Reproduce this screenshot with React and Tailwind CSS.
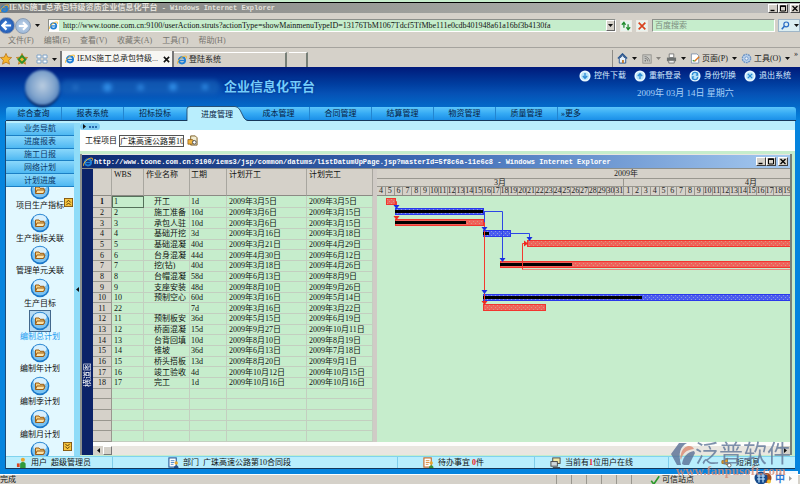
import React from "react";

const ROWS = [
  ["1", "开工", "1d", "2009年3月5日", "2009年3月5日"],
  ["2", "施工准备", "10d", "2009年3月6日", "2009年3月15日"],
  ["3", "承包人驻", "10d", "2009年3月6日", "2009年3月15日"],
  ["4", "基础开挖", "3d", "2009年3月16日", "2009年3月18日"],
  ["5", "基础混凝", "40d", "2009年3月21日", "2009年4月29日"],
  ["6", "台身混凝", "44d", "2009年4月30日", "2009年6月12日"],
  ["7", "挖(钻)", "40d", "2009年3月18日", "2009年4月26日"],
  ["8", "台帽混凝", "58d", "2009年6月13日", "2009年8月9日"],
  ["9", "支座安装", "48d", "2009年8月10日", "2009年9月26日"],
  ["10", "预制空心", "60d", "2009年3月16日", "2009年5月14日"],
  ["22", "", "7d", "2009年3月16日", "2009年3月22日"],
  ["11", "预制板安", "36d", "2009年5月15日", "2009年6月19日"],
  ["12", "桥面混凝", "15d", "2009年9月27日", "2009年10月11日"],
  ["13", "台背回填", "10d", "2009年8月10日", "2009年8月19日"],
  ["14", "锥坡", "36d", "2009年6月13日", "2009年7月18日"],
  ["15", "桥头搭板", "13d", "2009年8月20日", "2009年9月1日"],
  ["16", "竣工验收", "4d", "2009年10月12日", "2009年10月15日"],
  ["17", "完工", "1d", "2009年10月16日", "2009年10月16日"],
  [], [], [], [], [],
];

const DAYS = [...Array(28).keys()].map((i) => i + 4).concat([...Array(19).keys()].map((i) => i + 1));

const MENUS = ["文件(F)", "编辑(E)", "查看(V)", "收藏夹(A)", "工具(T)", "帮助(H)"];
const NAV = ["综合查询", "报表系统", "招标投标", "进度管理", "成本管理", "合同管理", "结算管理", "物资管理", "质量管理"];
const GROUPS = ["业务导航", "进度报表", "施工日报", "网络计划", "计划进度"];
const PLANS = ["项目生产指标", "生产指标关联", "管理单元关联", "生产目标", "编制总计划", "编制年计划", "编制季计划", "编制月计划", ""];

/* x, y, width, progress width, colour; a width of 3000 runs off the visible range */
const BARS = [
  [9, 2, 9, 0, "r"],
  [18, 12, 88, 88, "b"],
  [18, 23, 88, 71, "r"],
  [106, 34, 27, 6, "b"],
  [150, 44, 3000, 0, "r"],
  [123, 65, 3000, 72, "r"],
  [106, 98, 3000, 159, "b"],
  [106, 108, 62, 0, "r"],
];

function Ie({ size = "size-[9px]" }) {
  return (
    <svg viewBox="0 0 16 16" className={`${size} shrink-0`} aria-hidden="true">
      <circle cx="8" cy="8.5" r="5" fill="none" stroke="#1f7fd6" strokeWidth="3" />
      <path d="M4 8.8h9" stroke="#1f7fd6" strokeWidth="2.2" />
      <path d="M1 14C-1 10 9 0 15 2c1 1 0 3-1 4" fill="none" stroke="#f2b632" strokeWidth="1.6" />
    </svg>
  );
}

function Caret({ className = "" }) {
  return (
    <svg viewBox="0 0 5 3" className={`w-[5px] h-[3px] shrink-0 ${className}`} aria-hidden="true">
      <path d="M0 0h5L2.500 3z" fill="#111" />
    </svg>
  );
}

function Star({ color }) {
  return (
    <svg viewBox="0 0 14 14" className="size-[12px] shrink-0" aria-hidden="true">
      <path d="M7 .5l2 4.300 4.600.500-3.500 3.100 1 4.700L7 10.700l-4.100 2.400 1-4.700L.400 5.300 5 4.800z" fill="#f6b52d" stroke="#b26b10" strokeWidth=".8" />
      {color && <path d="M7 3.500L11 7.500 7 11.500 3 7.500z" fill="none" stroke={color} strokeWidth="2.200" />}
    </svg>
  );
}

function Sheet({ red }) {
  return (
    <svg viewBox="0 0 12 12" className="size-[11px] shrink-0" aria-hidden="true">
      <rect x="1" y="1" width="8" height="10" fill="#fff" stroke={red ? "#c8641e" : "#275a9a"} strokeWidth="1.200" />
      <path d="M3 4h4M3 6h4M3 8h3" stroke={red ? "#d98a3a" : "#4a83c4"} />
      <circle cx="9" cy="6.500" r="1.800" fill="#e8a52c" />
      <path d="M6.500 12c0-4 5-4 5 0z" fill={red ? "#3d9436" : "#28548e"} />
    </svg>
  );
}

function TitleBar() {
  return (
    <div className="border-t-2 border-[#c6edcc] bg-[#d5d1c9] pb-1">
      <div className="flex h-[11px] items-center border-t border-black bg-linear-to-r from-[#808080] via-[#9c9e9a] to-[#bcbcbc] text-[8px] font-bold text-[#e4e2dc]">
        <Ie />
        <span className="grow truncate font-['Liberation_Mono','Noto_Sans_CJK_SC',monospace] text-[7px] leading-[10px]">
          <span className="font-['Liberation_Serif','Noto_Sans_CJK_SC',serif] text-[8px]">IEMS施工总承包特级资质企业信息化平台</span> - Windows Internet Explorer
        </span>
        <WinButtons />
      </div>
    </div>
  );
}

function WinButtons() {
  const box = "flex h-[9px] w-[10px] items-center justify-center border border-t-white border-l-white border-r-[#404040] border-b-[#404040] bg-[#d5d1c9]";
  return (
    <div className="flex shrink-0">
      <button aria-label="最小化" className={box}>
        <svg viewBox="0 0 8 7" className="h-[7px] w-[8px]"><path d="M1.500 5.500h4" stroke="#000" strokeWidth="1.400" /></svg>
      </button>
      <button aria-label="最大化" className={box}>
        <svg viewBox="0 0 8 7" className="h-[7px] w-[8px]"><path d="M1.500 1v5h5V1z" fill="none" stroke="#000" /><path d="M1 1.200h6" stroke="#000" strokeWidth="1.400" /></svg>
      </button>
      <button aria-label="关闭" className={`ml-[2px] ${box}`}>
        <svg viewBox="0 0 8 7" className="h-[7px] w-[8px]"><path d="M1.500 1l5 5M6.500 1l-5 5" stroke="#000" strokeWidth="1.300" /></svg>
      </button>
    </div>
  );
}

function AddressRow() {
  const field = "h-[13px] min-w-0 border border-[#8c8f8a] border-r-white border-b-white bg-[#c6edcc]";
  const small = "flex h-[12px] w-[12px] shrink-0 items-center justify-center border border-[#eeebe4] bg-[#e8f3ee]";
  return (
    <div className="flex h-[17px] items-center bg-[#d5d1c9]">
      <button aria-label="后退" className="-ml-[2px] flex size-[17px] shrink-0 items-center justify-center rounded-full border border-[#8494b0] bg-radial from-[#4b8ee4] to-[#12469f]">
        <svg viewBox="0 0 12 12" className="size-[11px]"><path d="M6 1.500L1.500 6 6 10.500M2 6h9" fill="none" stroke="#fff" strokeWidth="2.400" /></svg>
      </button>
      <button aria-label="前进" className="flex size-[16px] shrink-0 items-center justify-center rounded-full border border-[#8b9db4] bg-radial from-[#c4d7ec] to-[#8fadd0]">
        <svg viewBox="0 0 12 12" className="size-[10px]"><path d="M6 1.500L10.500 6 6 10.500M10 6H1" fill="none" stroke="#fff" strokeWidth="2.400" /></svg>
      </button>
      <Caret className="ml-1" />
      <div className={`ml-[8px] flex grow items-center ${field}`}>
        <span className="mr-[4px] flex h-full w-[10px] items-center bg-white"><Ie /></span>
        <input
          aria-label="地址"
          className="min-w-0 grow bg-transparent font-['Liberation_Serif','Noto_Sans_CJK_SC',serif] text-[8px] leading-[10px] text-[#111] outline-none"
          defaultValue="http://www.toone.com.cn:9100/userAction.struts?actionType=showMainmenuTypeID=13176TbM1067Tdcf5TfMbe111e0cdb401948a61a16bf3b4130fa"
        />
        <button aria-label="展开地址" className="flex h-[11px] w-[9px] items-center justify-center border border-t-white border-l-white border-r-[#666] border-b-[#666] bg-[#d5d1c9]"><Caret /></button>
      </div>
      <button aria-label="刷新" className={`ml-[4px] ${small}`}>
        <svg viewBox="0 0 12 12" className="size-[10px]"><path d="M1 4.500l2.500-3 2 3M3.500 2v6M11 7.500l-2.500 3-2-3M8.500 10V4" fill="none" stroke="#1d8a2b" strokeWidth="1.500" /></svg>
      </button>
      <button aria-label="停止" className={`ml-[4px] ${small}`}>
        <svg viewBox="0 0 12 12" className="size-[10px]"><path d="M2 2l8 8M10 2l-8 8" stroke="#d8421d" strokeWidth="2" /></svg>
      </button>
      <input aria-label="百度搜索" placeholder="百度搜索" className={`ml-[4px] w-[123px] shrink-0 pl-[2px] text-[8px] leading-[10px] outline-none placeholder:text-[#7d8d80] ${field}`} />
      <button aria-label="搜索" className="ml-[3px] flex h-[13px] w-[22px] shrink-0 items-center gap-[4px] border border-[#9fb6c8] bg-[#dceef2] pl-[2px]">
        <svg viewBox="0 0 12 12" className="size-[9px]"><circle cx="7" cy="4.500" r="3.200" fill="none" stroke="#2b6cc4" strokeWidth="1.600" /><path d="M4.500 7L1 11" stroke="#2b6cc4" strokeWidth="2" /></svg>
        <Caret />
      </button>
    </div>
  );
}

function TabRow() {
  return (
    <div className="flex h-[20px] items-end border-t border-[#a5a39e] bg-[#d5d1c9] pt-[2px]">
      <div className="flex h-[16px] w-[60px] shrink-0 items-center">
        <Star />
        <span className="w-[4px]" />
        <Star color="#2f8f2a" />
        <span className="w-[8px]" />
        <svg viewBox="0 0 12 10" className="h-[10px] w-[12px]"><path d="M1 1h4v3H1zM7 1h4v3H7zM1 6h4v3H1zM7 6h4v3H7z" fill="#fff" stroke="#7fa3c8" /></svg>
        <Caret className="ml-[4px]" />
      </div>
      <div className="flex h-[16px] w-[114px] shrink-0 items-center gap-[2px] border-l-2 border-r-2 border-l-[#777] border-r-[#777] bg-[#f7f6f3] pl-[3px]">
        <Ie size="size-[10px]" />
        <a href="#main" className="grow truncate text-[8px] leading-[10px] text-[#222]">IEMS施工总承包特级...</a>
        <button aria-label="关闭标签" className="pr-[2px]">
          <svg viewBox="0 0 8 8" className="size-[7px]"><path d="M1 1l6 6M7 1L1 7" stroke="#111" strokeWidth="1.800" /></svg>
        </button>
      </div>
      <div className="flex h-[15px] w-[113px] shrink-0 items-center gap-[2px] border-t border-r-2 border-t-white border-r-[#777f77] pl-[3px]">
        <Ie size="size-[10px]" />
        <a href="#login" className="text-[8px] leading-[10px] text-[#222]">登陆系统</a>
      </div>
      <div className="ml-[2px] h-[15px] w-[19px] shrink-0 border-t border-r-2 border-t-white border-r-[#777f77]" />
      <div className="ml-auto flex h-[17px] shrink-0 items-center border-l border-[#8d8b86] pl-[4px] text-[8px] text-[#222]">
        <svg viewBox="0 0 12 12" className="size-[11px]"><path d="M1 6l5-5 5 5" fill="none" stroke="#28548e" strokeWidth="1.600" /><path d="M2.500 6v5h7V6L6 3z" fill="#e8f1fa" stroke="#28548e" /><path d="M5.500 7.500h2V11h-2z" fill="#c27a2c" /></svg>
        <Caret className="ml-[4px]" />
        <svg viewBox="0 0 12 12" className="ml-[5px] size-[10px]"><rect x="1" y="1" width="10" height="10" fill="#c9c9c4" stroke="#8c8c88" /><circle cx="4" cy="8" r="1" fill="#777" /><path d="M3 5a4 4 0 014 4M3 3a6 6 0 016 6" fill="none" stroke="#777" /></svg>
        <Caret className="ml-[4px] opacity-40" />
        <svg viewBox="0 0 12 12" className="ml-[5px] size-[11px]"><path d="M3.500 1h5v4h-5z" fill="#fff" stroke="#777" /><path d="M1 5h10v4H1z" fill="#6e7271" /><path d="M3 8h6v3H3z" fill="#eee" stroke="#777" /></svg>
        <Caret className="ml-[4px]" />
        <svg viewBox="0 0 12 12" className="ml-[4px] size-[11px]"><path d="M1.500 1h6l2 2v8h-8z" fill="#fff" stroke="#8394ac" /><path d="M5 9l5-5" stroke="#dc7a24" strokeWidth="1.600" /><path d="M3 8l2 1" stroke="#3d9436" strokeWidth="1.400" /></svg>
        <button className="ml-px">页面(P)</button>
        <Caret className="ml-[4px]" />
        <svg viewBox="0 0 12 12" className="ml-[4px] size-[11px]"><circle cx="6" cy="6" r="4.500" fill="#b9d2ee" stroke="#6a92c4" strokeWidth="1.500" strokeDasharray="2 .8" /><circle cx="6" cy="6" r="1.800" fill="#eef4fb" stroke="#6a92c4" /></svg>
        <button className="ml-[2px]">工具(O)</button>
        <Caret className="mx-[4px]" />
        <span className="w-[6px] self-start leading-[8px]">»</span>
      </div>
    </div>
  );
}

function RoundIcon({ d }) {
  return (
    <svg viewBox="0 0 14 14" className="size-[12px] shrink-0" aria-hidden="true">
      <circle cx="7" cy="7" r="6.500" fill="#e9f8ff" />
      <circle cx="7" cy="7" r="4.500" fill="#b5e2f8" />
      <path d={d} fill="none" stroke="#2a8ad4" strokeWidth="1.500" />
    </svg>
  );
}

function Banner() {
  const links = [
    ["控件下载", "M7 3.500v6M4.500 7L7 9.800 9.500 7"],
    ["重新登录", "M7 10.500v-6M4.500 7L7 4.200 9.500 7"],
    ["身份切换", "M4 6a3 3 0 016-.5M10 8a3 3 0 01-6 .5M10 3v3H8M4 11V8h2"],
    ["退出系统", "M4.500 4.500l5 5M9.500 4.500l-5 5"],
  ];
  return (
    <header className="flex h-[40px] justify-between">
      <div className="flex items-center pl-[25px]">
        <div className="size-[35px] rounded-full bg-radial-[at_50%_45%] from-[#b9cce0] via-[#7fa3cc] to-[#2b62ac] shadow-[0_2px_1px_#03174e] blur-[1px]" />
        <div className="flex h-[14px] w-[160px] items-center justify-around rounded-full bg-[#1b68bd]/60 blur-[2px]">
          <span className="size-[5px] rounded-full bg-[#2a73c8]" />
          <span className="size-[9px] rounded-full bg-[#2f8be4]" />
          <span className="size-[7px] rounded-full bg-[#2a7fd8]" />
          <span className="size-[8px] rounded-full bg-[#2f8be4]" />
          <span className="size-[6px] rounded-full bg-[#2f8be4]" />
        </div>
        <h1 className="ml-[4px] text-[13px] leading-[18px] font-bold text-[#74cdfb] [text-shadow:0_0_2px_#00247c]">企业信息化平台</h1>
      </div>
      <div className="flex flex-col pt-[3px] pr-[9px]">
        <nav className="flex gap-[8px] text-[8px] leading-[12px] text-[#d5ecff]">
          {links.map(([t, d]) => (
            <a key={t} href="#link" className="flex items-center gap-[3px]"><RoundIcon d={d} />{t}</a>
          ))}
        </nav>
        <div className="mt-[4px] pl-[58px] text-[9px] leading-[14px] text-[#a8d2f8]">2009年 03月 14日 星期六</div>
      </div>
    </header>
  );
}

function NavBar() {
  return (
    <nav className="mr-[4px] ml-[6px] flex h-[14px] rounded-t-[3px] border-b border-[#16385c] bg-linear-to-b from-[#5cc6fa] via-[#35aaf4] to-[#1a8fe8] text-[8px] leading-[13px] text-[#06203f]">
      {NAV.map((t, i) =>
        i === 3 ? (
          <button key={t} className="relative h-[14px] w-[62px] shrink-0 text-center leading-[13px]">
            <svg viewBox="0 0 62 15" className="absolute -top-px left-0 h-[15px] w-[62px]" aria-hidden="true">
              <path d="M1 15V3q0-2.500 3-2.500h45q3 0 5 3.500l4 8q2 3 4 3z" fill="#b9eefd" />
              <path d="M1 15V3q0-2.500 3-2.500h45q3 0 5 3.500l4 8q2 2.500 4 2.500" fill="none" stroke="#16385c" strokeWidth=".8" />
            </svg>
            <span className="relative">{t}</span>
          </button>
        ) : (
          <button key={t} className={`${i === 0 ? "w-[56px]" : "w-[62px]"} shrink-0 text-center ${i === 2 ? "" : "border-r border-[#2385d0]"}`}>{t}</button>
        )
      )}
      <button className="ml-[3px]">»更多</button>
    </nav>
  );
}

function Folder() {
  return (
    <svg viewBox="0 0 20 20" className="size-[20px]" aria-hidden="true">
      <circle cx="10" cy="10" r="9.300" fill="#1b78c9" />
      <circle cx="10" cy="9.500" r="8" fill="#7cc3f1" />
      <ellipse cx="10" cy="6" rx="6.500" ry="4" fill="#d9f0fd" />
      <path d="M5.500 13V7h3.500l1 1.300h4V13z" fill="#f7cf7d" stroke="#9a5c14" />
      <path d="M5.500 13.500l1.500-3.500h8l-1.500 3.500z" fill="#fbe2a6" stroke="#9a5c14" />
    </svg>
  );
}

function ScrollBadge({ up }) {
  return (
    <svg viewBox="0 0 10 10" className="size-[9px]" aria-hidden="true">
      <rect x=".5" y=".5" width="9" height="9" fill="#f8c63e" stroke="#80540c" />
      <path d={up ? "M2.500 5L5 2.500 7.500 5M2.500 8L5 5.500 7.500 8" : "M2.500 2L5 4.500 7.500 2M2.500 5L5 7.500 7.500 5"} fill="none" stroke="#4a2c00" />
    </svg>
  );
}

function Sidebar() {
  return (
    <aside className="flex w-[68px] shrink-0 flex-col bg-[#e2f8ff]">
      <div className="grid h-[64px] shrink-0 grid-rows-5">
        {GROUPS.map((g) => (
          <button key={g} className="border-b border-[#1b7fc4] bg-linear-to-b from-[#8ad8fb] to-[#4db8f2] text-[8px] leading-[11px] text-[#0b3768]">{g}</button>
        ))}
      </div>
      <div className="relative h-[269px] overflow-hidden">
        <ul className="-mt-[8px] grid h-[294px] grid-rows-9">
          {PLANS.map((p, i) => (
            <li key={i} className="flex flex-col items-center">
              <a href="#plan" className="flex flex-col items-center">
                <span className={i === 4 ? "border border-[#43688c] bg-[#b6daf2]" : "border border-transparent"}><Folder /></span>
                <span className={`text-[8px] leading-[10px] whitespace-nowrap ${i === 4 ? "text-[#1a9af0]" : "text-[#111]"}`}>{p}</span>
              </a>
            </li>
          ))}
        </ul>
        <button aria-label="向上" className="absolute top-[11px] right-[1px]"><ScrollBadge up /></button>
        <button aria-label="向下" className="absolute right-[2px] bottom-[5px]"><ScrollBadge /></button>
      </div>
    </aside>
  );
}

function TaskTable() {
  const th = "border-r border-b border-r-[#a8a69f] border-b-[#8c8a84] bg-[#d5d1c9] pt-[1px] text-left align-top font-normal";
  const td = "overflow-hidden border-r border-b border-[#c3cfc0] p-0 pl-[2px] whitespace-nowrap";
  return (
    <table className="h-[273px] w-[280px] shrink-0 table-fixed border-separate border-spacing-0 bg-[#c6edcc] text-[8px] leading-[9px] text-[#111]">
      <colgroup>
        <col className="w-[19px]" /><col className="w-[32px]" /><col className="w-[46px]" />
        <col className="w-[37px]" /><col className="w-[80px]" /><col className="w-[66px]" />
      </colgroup>
      <thead>
        <tr className="h-[27px]">
          <th className={th} aria-label="序号" />
          <th className={`${th} pl-[2px]`}>WBS</th>
          <th className={`${th} pl-[2px]`}>作业名称</th>
          <th className={`${th} pl-[1px]`}>工期</th>
          <th className={`${th} pl-[2px]`}>计划开工</th>
          <th className={`${th} pl-[2px]`}>计划完工</th>
        </tr>
      </thead>
      <tbody>
        {ROWS.map((r, i) => (
          <tr key={i}>
            <th scope="row" className={`h-[10px] border-r border-b border-[#99978f] bg-[#d5d1c9] p-0 text-center ${i === 0 ? "font-bold" : "font-normal"}`}>{r.length ? i + 1 : ""}</th>
            <td className={i === 0 ? "border border-[#55705a] p-0 pl-px" : td}>{r[0]}</td>
            <td className={`${td} pl-[10px]`}>{r[1]}</td>
            <td className={`${td} pl-px`}>{r[2]}</td>
            <td className={td}>{r[3]}</td>
            <td className={td}>{r[4]}</td>
          </tr>
        ))}
      </tbody>
    </table>
  );
}

function Gantt() {
  return (
    <section aria-label="横道图" className="flex min-w-0 grow flex-col overflow-hidden border-l-4 border-[#d0cbc6] bg-[#c6edcc] text-[8px] text-[#222]">
      <div className="h-[27px] shrink-0 border-b border-[#8c8a84] bg-[#d5d1c9]">
        <div className="h-[10px] border-b border-[#99978f] pl-[237px] leading-[9px]">2009年</div>
        <div className="flex h-[8px] border-b border-[#99978f] leading-[8px]">
          <div className="w-[247px] shrink-0 border-r border-[#99978f] text-center">3月</div>
          <div className="w-[254px] shrink-0 text-center">4月</div>
        </div>
        <div className="grid h-[8px] w-[415px] grid-cols-[repeat(47,minmax(0,1fr))] leading-[8px]">
          {DAYS.map((d, i) => (
            <span key={i} className="flex justify-center border-r border-[#99978f]">{d}</span>
          ))}
        </div>
      </div>
      <svg className="h-[246px] w-full" aria-hidden="true">
        <defs>
          <pattern id="r" width="4" height="4" patternUnits="userSpaceOnUse"><rect width="4" height="4" fill="#f0625a" /><path d="M0 1.500h1M2 3.500h1" stroke="#d99a80" strokeWidth="1" /></pattern>
          <pattern id="b" width="4" height="4" patternUnits="userSpaceOnUse"><rect width="4" height="4" fill="#4a5cf0" /><path d="M0 1.500h1M2 3.500h1" stroke="#8d9ae0" strokeWidth="1" /></pattern>
        </defs>
        <path d="M145.500 73.500H3000" stroke="#e58f80" />
        {BARS.map(([x, y, w, p, c], i) => (
          <g key={i}>
            <rect x={x + 0.5} y={y + 0.5} width={w} height="6" fill={c === "r" ? "url(#r)" : "url(#b)"} stroke={c === "r" ? "#f2352e" : "#2a38ea"} />
            {p > 0 && <rect x={x} y={y + 2} width={p} height="3" fill="#000" />}
          </g>
        ))}
        <g fill="none" stroke="#2c46e6">
          <path d="M106 15.500H125.500V62M107.500 16V34M133 37.500H152.500V41" />
        </g>
        <g fill="none" stroke="#f23a2e">
          <path d="M18 5.500H19.500V9M106 26.500H107.500V106M150 47.500H145.500V73.500" />
        </g>
        <path d="M16.500 9h6l-3 4zM104.500 31h6l-3 4zM104.500 94h6l-3 4zM122.500 62h6l-3 4zM149.500 41h6l-3 4z" fill="#1a2ee0" />
        <path d="M16.500 20h6l-3 4zM104.500 105h6l-3 4zM147 44.500v6l4-3z" fill="#ee2a20" />
      </svg>
    </section>
  );
}

function PlanWindow() {
  return (
    <section className="flex flex-col border-r-2 border-l-2 border-r-[#77807a] border-l-[#8b8f8c] bg-[#d5d1c9]">
      <div className="flex h-[14px] items-center border-t border-[#e8e6e0] bg-linear-to-r from-[#0d2a72] via-[#3f6cb6] to-[#a6caf0] pr-[2px] pl-px text-white">
        <Ie size="size-[10px]" />
        <h2 className="ml-px grow truncate font-['Liberation_Mono','Noto_Sans_CJK_SC',monospace] text-[7px] leading-[12px] font-bold">
          http://www.toone.com.cn:9100/iems3/jsp/common/datums/listDatumUpPage.jsp?masterId=5f8c6a-11e6c8 - Windows Internet Explorer
        </h2>
        <WinButtons />
      </div>
      <div className="flex border-t border-[#8b8f8c]">
        <div className="flex w-[11px] shrink-0 items-center justify-end bg-[#0b2268] pb-[68px] text-[8px] leading-[10px] text-white [text-orientation:sideways] [writing-mode:vertical-rl]">
          <span className="rotate-180">横道图</span>
        </div>
        <div className="flex min-w-0 grow flex-col">
          <div className="flex"><TaskTable /><Gantt /></div>
          <div className="h-[4px] bg-[#fdfdfb]" />
          <div className="flex h-[9px] items-center justify-between bg-[#e9e6e0]">
            <div className="flex h-full">
              <button aria-label="向左滚动" className="flex w-[10px] items-center justify-center bg-[#d5d1c9]"><Caret className="rotate-90" /></button>
              <span className="w-[9px] border border-t-white border-l-white border-r-[#777] border-b-[#777] bg-[#d5d1c9]" />
            </div>
            <button aria-label="向右滚动" className="flex h-full w-[10px] items-center justify-center bg-[#d5d1c9]"><Caret className="-rotate-90" /></button>
          </div>
        </div>
      </div>
    </section>
  );
}

function Footer() {
  const cell = "flex min-w-0 items-center gap-[4px] border-r border-[#7fcdea] whitespace-nowrap";
  return (
    <footer className="grid h-[13px] grid-cols-[107fr_285fr_137fr_134fr_126fr] border-t border-b border-t-[#7fd3ee] border-b-[#16385c] bg-[#b9eefd] text-[8px] leading-[11px] text-[#111]">
      <div className={`${cell} pl-[10px]`}>
        <svg viewBox="0 0 12 12" className="size-[11px] shrink-0"><circle cx="7.500" cy="3" r="2.200" fill="#e8a52c" /><path d="M4.500 12V7q3-3 6 0v5z" fill="#2f9a3a" /><path d="M1 7h3v4H1z" fill="#d8421d" /></svg>
        用户&nbsp; 超级管理员
      </div>
      <div className={`${cell} pl-[55px]`}><Sheet />部门&nbsp; 广珠高速公路第10合同段</div>
      <div className={`${cell} pl-[25px]`}><Sheet red /><span>待办事宜 <b className="text-[#f01818]">0</b>件</span></div>
      <div className={`${cell} pl-[15px]`}>
        <svg viewBox="0 0 12 12" className="size-[11px] shrink-0"><rect x="3" y="1" width="8" height="6" fill="#f3e9a5" stroke="#444" /><rect x="1" y="5" width="7" height="5" fill="#cfd8dc" stroke="#444" /><path d="M3 11.500h8" stroke="#444" /></svg>
        <span>当前有<b className="text-[#f01818]">1</b>位用户在线</span>
      </div>
      <div className={`${cell} border-r-0 pl-[52px]`}>
        <svg viewBox="0 0 12 12" className="size-[11px] shrink-0"><path d="M1 4h3l3-3v8L4 7H1z" fill="#f0a428" stroke="#8a5610" strokeWidth=".8" /><circle cx="9" cy="9" r="2" fill="#fff" stroke="#666" /></svg>
        短消息
      </div>
    </footer>
  );
}

function StatusBar() {
  return (
    <div className="flex min-h-[10px] grow items-start border-t border-white bg-[#d5d1c9] text-[8px] leading-[10px] text-[#111]">
      <span className="grow">完成</span>
      {[0, 1, 2, 3, 4].map((i) => (
        <span key={i} className="h-[10px] w-[15px] shrink-0 border-l border-[#99978f]" />
      ))}
      <span className="flex w-[169px] shrink-0 items-center gap-[2px] border-l border-[#99978f] pl-[18px]">
        <svg viewBox="0 0 12 12" className="size-[10px]"><path d="M1.500 7l3 4L11 1.500" fill="none" stroke="#2c9a2c" strokeWidth="2" /></svg>
        可信站点
      </span>
    </div>
  );
}

function Overlays() {
  return (
    <>
      <div className="absolute right-[2px] bottom-0 flex h-[14px] w-[48px] items-center gap-[3px] bg-white/95 pl-[4px]">
        <svg viewBox="0 0 18 14" className="h-[14px] w-[18px]" aria-hidden="true">
          <circle cx="12.500" cy="7" r="5" fill="#a04a1c" />
          <circle cx="7" cy="7" r="6.500" fill="#154a8c" />
          <path d="M3 5h8M3 8h8M5 2.500v9M9 2.500v9" stroke="#bfe2fa" strokeWidth="1.200" />
          <circle cx="15" cy="10.500" r="2" fill="#f0c030" />
        </svg>
        <span className="text-[10px] leading-[13px] font-bold text-[#2b78d4]">中</span>
        <Caret className="-rotate-90 opacity-40" />
      </div>
      <div className="pointer-events-none absolute right-[9px] bottom-[9px] opacity-80">
        <div className="flex items-center">
          <svg viewBox="0 0 24 24" className="size-[24px]" aria-hidden="true">
            <path d="M8 1h8C9 5 7 11 10 23H6L0 12z" fill="#5a7096" />
            <path d="M23 7c-2-5-11-4-13 5-1 3-1 4 0 6C12 11 15 8 23 7z" fill="#dc8a72" />
            <path d="M23 9c-6 1-11 5-12 13l2 1h5l6-12z" fill="#5a7096" />
          </svg>
          <span className="text-[24px] leading-[24px] text-[#5f7698]">泛普软件</span>
        </div>
        <div className="text-center font-['Liberation_Serif',serif] text-[13px] leading-[10px] font-bold text-[#d98a74]">www.fanpusoft.com</div>
      </div>
    </>
  );
}

export default function App() {
  return (
    <div className="relative flex min-h-screen flex-col overflow-hidden font-['Liberation_Serif','Noto_Sans_CJK_SC',serif]">
      <TitleBar />
      <AddressRow />
      <nav className="flex h-[13px] items-center gap-[10px] bg-[#d5d1c9] pl-[8px] text-[8px] leading-[10px] text-[#77756f]">
        {MENUS.map((m) => <button key={m}>{m}</button>)}
      </nav>
      <TabRow />
      <div className="bg-[#0584de] bg-linear-to-b from-[#00197a] via-[#0650b4] via-[26px] to-[#0584de] to-[54px] pb-[5px]">
        <Banner />
        <NavBar />
        <main id="main" className="mr-[5px] ml-[5px] border-l border-[#1b4a78] bg-[#b9eefd] pt-[2px]">
          <div className="flex">
            <Sidebar />
            <div className="flex w-[6px] shrink-0 items-center justify-center bg-[#8fdcf8]"><Caret className="rotate-90" /></div>
            <div className="flex min-w-0 grow flex-col bg-[#c6edcc] pr-[3px]">
              <div className="-mr-[3px] flex h-[7px] items-center bg-[#b9eefd]">
                <span className="flex h-full w-[20px] items-center gap-[2px] rounded-sm bg-[#7ccdf4] pl-[2px]">
                  <Caret className="-rotate-90" />
                  <span className="w-[8px] border-t-2 border-dotted border-[#2a6cb0]" />
                </span>
              </div>
              <div className="-mr-[3px] flex h-[21px] items-center bg-white pl-[5px] text-[8px] leading-[10px] text-[#111]">
                <label htmlFor="project">工程项目</label>
                <input id="project" className="ml-[2px] h-[12px] w-[65px] border border-[#555] bg-[#fdfdfb] outline-none" defaultValue="广珠高速公路第10" />
                <button aria-label="选择项目" className="ml-[3px]">
                  <svg viewBox="0 0 12 12" className="size-[11px]"><path d="M4 1h5l2 2v8H4z" fill="#f3ecd0" stroke="#7a5a20" /><path d="M1 5h5l2 3-2 2H1z" fill="#f0b440" stroke="#8a5610" strokeWidth=".8" /><circle cx="8" cy="8" r="2" fill="#fff" stroke="#444" /></svg>
                </button>
              </div>
              <div className="h-[3px]" />
              <PlanWindow />
            </div>
          </div>
          <Footer />
        </main>
      </div>
      <StatusBar />
      <Overlays />
    </div>
  );
}
